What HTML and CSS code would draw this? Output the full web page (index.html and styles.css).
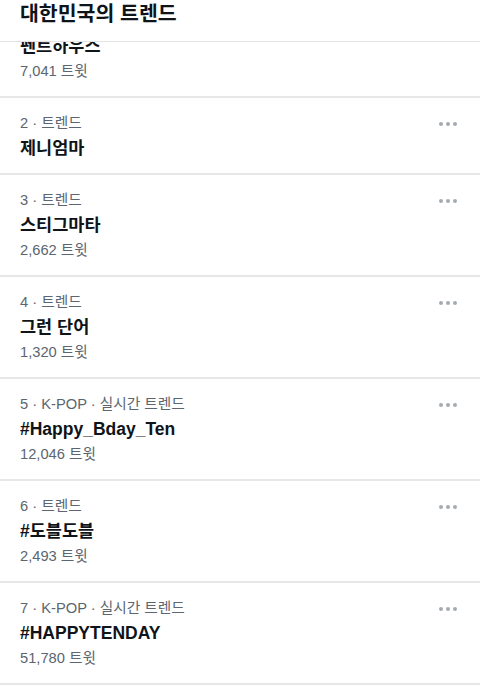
FILE: index.html
```html
<!DOCTYPE html>
<html lang="ko">
<head>
<meta charset="utf-8">
<link rel="stylesheet" href="styles.css">
</head>
<body>
<div class="page">
  <header class="header"><h1 class="header-title">대한민국의 트렌드</h1></header>
  <div class="list">
    <div class="item item-first">
      <div class="text">
        <div class="title">펜트하우스</div>
        <div class="count">7,041 트윗</div>
      </div>
    </div>
    <div class="item">
      <div class="text">
        <div class="meta">2 · 트렌드</div>
        <div class="title">제니엄마</div>
      </div>
      <div class="more"><span></span><span></span><span></span></div>
    </div>
    <div class="item">
      <div class="text">
        <div class="meta">3 · 트렌드</div>
        <div class="title">스티그마타</div>
        <div class="count">2,662 트윗</div>
      </div>
      <div class="more"><span></span><span></span><span></span></div>
    </div>
    <div class="item">
      <div class="text">
        <div class="meta">4 · 트렌드</div>
        <div class="title">그런 단어</div>
        <div class="count">1,320 트윗</div>
      </div>
      <div class="more"><span></span><span></span><span></span></div>
    </div>
    <div class="item">
      <div class="text">
        <div class="meta">5 · K-POP · 실시간 트렌드</div>
        <div class="title">#Happy_Bday_Ten</div>
        <div class="count">12,046 트윗</div>
      </div>
      <div class="more"><span></span><span></span><span></span></div>
    </div>
    <div class="item">
      <div class="text">
        <div class="meta">6 · 트렌드</div>
        <div class="title">#도블도블</div>
        <div class="count">2,493 트윗</div>
      </div>
      <div class="more"><span></span><span></span><span></span></div>
    </div>
    <div class="item">
      <div class="text">
        <div class="meta">7 · K-POP · 실시간 트렌드</div>
        <div class="title">#HAPPYTENDAY</div>
        <div class="count">51,780 트윗</div>
      </div>
      <div class="more"><span></span><span></span><span></span></div>
    </div>
  </div>
</div>
</body>
</html>
```
FILE: styles.css
```css
html, body {
  margin: 0;
  padding: 0;
  background: #ffffff;
}
body {
  font-family: "Liberation Sans", "Noto Sans CJK KR", sans-serif;
  color: #0f1419;
  overflow: hidden;
  height: 696px;
}
.page {
  display: flex;
  flex-direction: column;
  width: 480px;
  height: 696px;
  overflow: hidden;
}
.header {
  flex: none;
  height: 41px;
  background: #ffffff;
  border-bottom: 1px solid #e3e3e3;
  padding: 0 20px;
}
.header-title {
  margin: 0;
  font-size: 20.5px;
  font-weight: 700;
  line-height: 24px;
  color: #0f1419;
  font-family: "Noto Sans CJK KR", sans-serif;
}
.list {
  flex: 1;
  overflow: hidden;
}
.item {
  display: flex;
  justify-content: space-between;
  padding: 13px 20px 12px;
  border-bottom: 2px solid #e6e7e8;
}
.item-first {
  margin-top: -8px;
  padding-top: 0;
}
.text {
  display: flex;
  flex-direction: column;
}
.meta,
.title,
.count {
  height: 25px;
  line-height: 25px;
  white-space: nowrap;
}
.meta {
  font-size: 14.7px;
  color: #5b6670;
}
.title {
  font-size: 17.5px;
  font-weight: 700;
  color: #0f1419;
}
.count {
  font-size: 14.7px;
  color: #5b6670;
}
.more {
  display: flex;
  gap: 3px;
  padding-top: 11px;
  padding-right: 3px;
}
.more span {
  width: 4px;
  height: 4px;
  border-radius: 50%;
  background: #a5abb0;
}
```
